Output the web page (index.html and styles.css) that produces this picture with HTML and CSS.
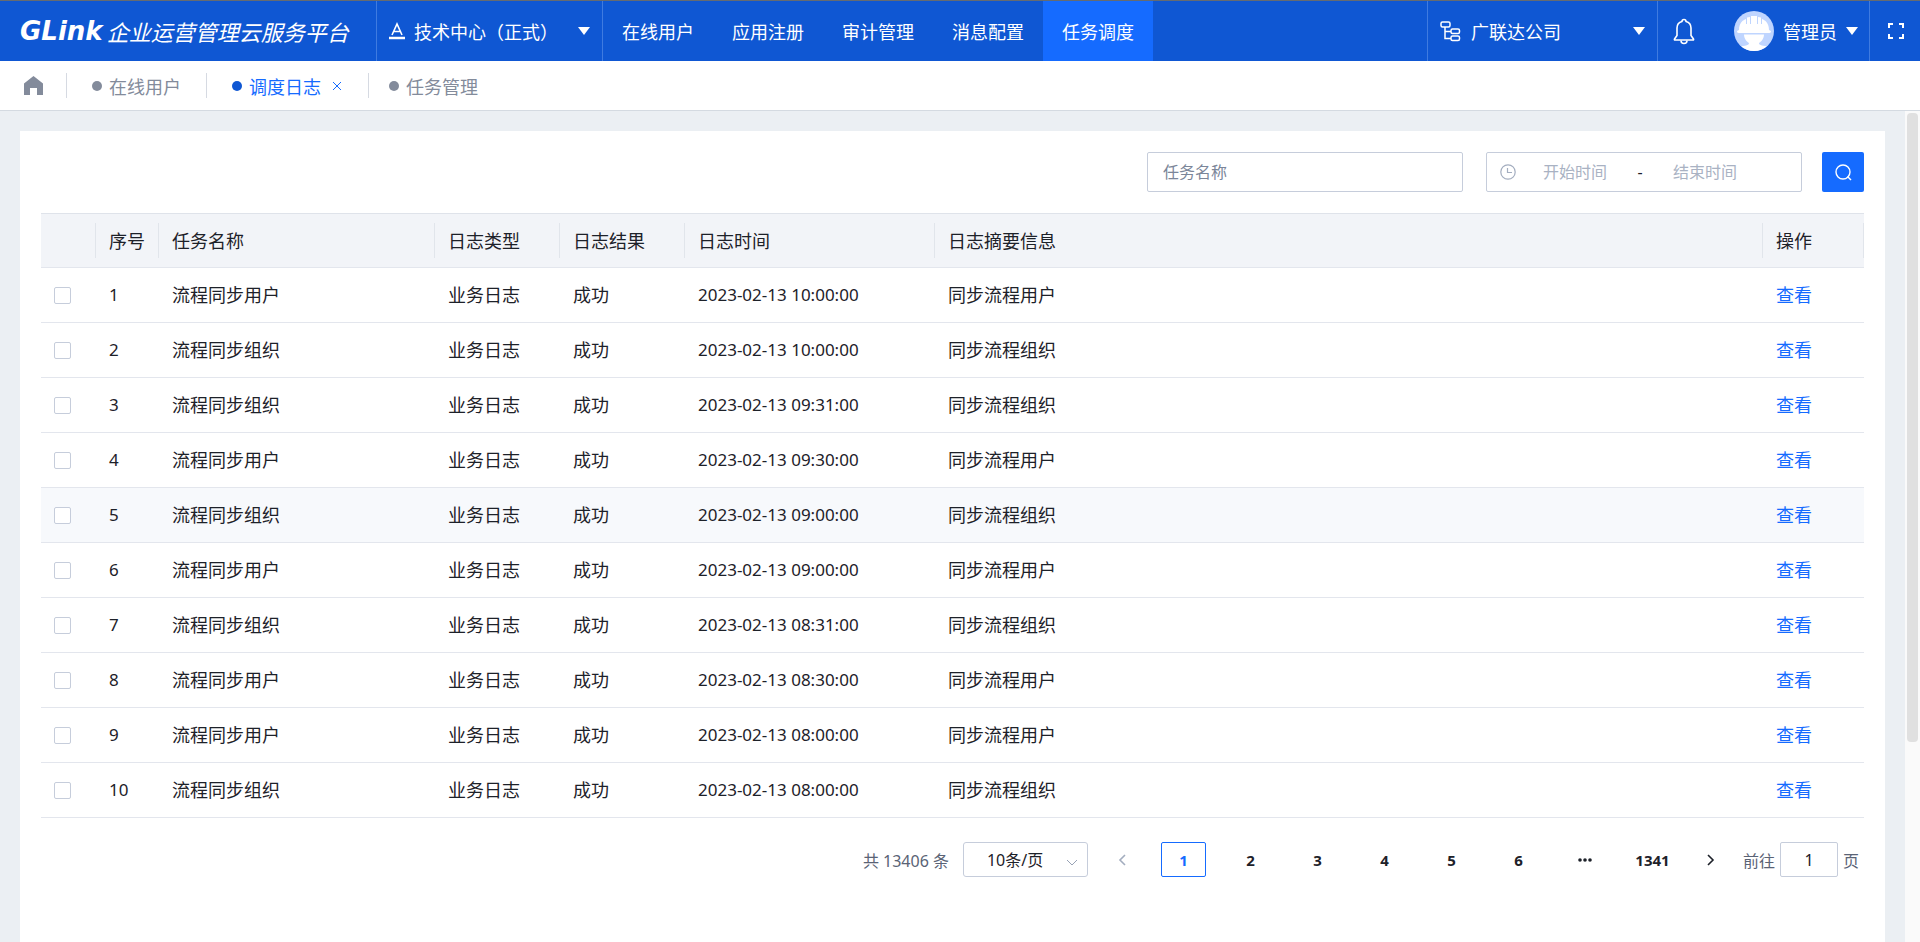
FILE: index.html
```html
<!DOCTYPE html>
<html lang="zh-CN">
<head>
    <meta charset="UTF-8">
    <meta name="viewport" content="width=device-width, initial-scale=1.0">
    <title>调度日志</title>
    <link rel="stylesheet" href="styles.css">
</head>

<body>

    <header class="header">

        <div class="brand">
            <span class="logo">GLink</span>
            <span class="brand-name">企业运营管理云服务平台</span>
        </div>

        <button type="button" class="app-select">
            <svg width="16" height="18" viewBox="0 0 16 18" fill="none" stroke="currentColor">
                <path d="M3 13L8 2l5 11M5 9.500h6" stroke-width="1.600"/>
                <path d="M0 16h16" stroke-width="2.500"/>
            </svg>
            <span>技术中心（正式）</span>
            <i class="caret"></i>
        </button>

        <nav class="nav">
            <a href="#">在线用户</a>
            <a href="#">应用注册</a>
            <a href="#">审计管理</a>
            <a href="#">消息配置</a>
            <a href="#" class="active">任务调度</a>
        </nav>

        <button type="button" class="org-select">
            <svg width="21" height="21" viewBox="0 0 21 21" fill="none" stroke="currentColor" stroke-width="1.5">
                <rect x="1" y="1" width="9" height="5" rx="1.500"/>
                <rect x="11" y="8" width="8.500" height="4.500" rx="1.500"/>
                <rect x="11" y="15" width="8.500" height="4.500" rx="1.500"/>
                <path d="M5 6v11.500h6M5 10.500h6"/>
            </svg>
            <span>广联达公司</span>
            <i class="caret"></i>
        </button>

        <button type="button" class="bell" aria-label="消息">
            <svg width="22" height="27" viewBox="0 0 22 27" fill="none" stroke="currentColor" stroke-width="1.6" stroke-linejoin="round">
                <path d="M9 3.500C9 .800 13 .800 13 3.500c3.500 1 5 3.500 5 6.500v7.500l2.500 3.500c.3.700 0 1-.5 1H2c-.5 0-.8-.3-.5-1L4 17.500V10c0-3 1.500-5.500 5-6.500z"/>
                <path d="M8 22.500c0 4 6 4 6 0"/>
            </svg>
        </button>

        <button type="button" class="user">
            <svg class="avatar" width="40" height="40" viewBox="0 0 40 40">
                <circle cx="20" cy="20" r="20" fill="#bfd5ff"/>
                <path d="M5 19C5 12 9 9 12 8v5h1V6.500L16 6v7h1V5h6v8h1V6l3 .5V13h1V8c3 1 7 4 7 11l2 1c0 2-1 2-3 2H6c-2 0-3 0-3-2z" fill="#fff"/>
                <path d="M10 23.500h20c0 4-3 7.500-5 8.500 0 2 2 2.500 8 3.200A20 20 0 0 1 7 35.200C13 34.500 15 34 15 32c-2-1-5-4.500-5-8.500z" fill="#fff"/>
            </svg>
            <span>管理员</span>
            <i class="caret"></i>
        </button>

        <button type="button" class="fullscreen" aria-label="全屏">
            <svg width="16" height="16" viewBox="0 0 16 16" fill="none" stroke="currentColor" stroke-width="2">
                <path d="M1 5V1h4M11 1h4v4M15 11v4h-4M5 15H1v-4"/>
            </svg>
        </button>

    </header>

    <nav class="tabs">
        <a href="#" class="tab-home" aria-label="首页">
            <svg width="19" height="19" viewBox="0 0 19 19" fill="currentColor">
                <path d="M9.500 0L19 7.500V19h-6v-7H6v7H0V7.500z"/>
            </svg>
        </a>
        <div class="tab"><i class="dot"></i><a href="#">在线用户</a></div>
        <div class="tab current">
            <i class="dot"></i><a href="#">调度日志</a>
            <button type="button" class="tab-close" aria-label="关闭">
                <svg width="10" height="10" viewBox="0 0 10 10" fill="none" stroke="currentColor"><path d="M1 1l8 8M9 1L1 9"/></svg>
            </button>
        </div>
        <div class="tab"><i class="dot"></i><a href="#">任务管理</a></div>
    </nav>

    <div class="page">

        <main class="card">

            <form class="search">
                <input type="text" class="search-name" placeholder="任务名称" aria-label="任务名称">
                <div class="date-range">
                    <svg width="16" height="16" viewBox="0 0 16 16" fill="none" stroke="currentColor" stroke-width="1.200">
                        <circle cx="8" cy="8" r="7.200"/>
                        <path d="M7.500 4v4.500H12"/>
                    </svg>
                    <input type="text" placeholder="开始时间" aria-label="开始时间">
                    <span>-</span>
                    <input type="text" placeholder="结束时间" aria-label="结束时间">
                </div>
                <button type="button" class="search-btn" aria-label="查询">
                    <svg width="17" height="17" viewBox="0 0 17 17" fill="none" stroke="currentColor" stroke-width="1.400">
                        <circle cx="8" cy="8" r="7"/>
                        <path d="M12.500 12.500l3.500 3.500"/>
                    </svg>
                </button>
            </form>

            <table class="log-table">
                <colgroup>
                    <col class="col-check">
                    <col class="col-index">
                    <col class="col-name">
                    <col class="col-short">
                    <col class="col-short">
                    <col class="col-time">
                    <col>
                    <col class="col-action">
                </colgroup>
                <thead>
                    <tr>
                        <th></th>
                        <th>序号</th>
                        <th>任务名称</th>
                        <th>日志类型</th>
                        <th>日志结果</th>
                        <th>日志时间</th>
                        <th>日志摘要信息</th>
                        <th>操作</th>
                    </tr>
                </thead>
                <tbody>
                    <tr>
                        <td><input type="checkbox" aria-label="选择 1"></td>
                        <td class="num">1</td>
                        <td>流程同步用户</td>
                        <td>业务日志</td>
                        <td>成功</td>
                        <td class="num">2023-02-13 10:00:00</td>
                        <td>同步流程用户</td>
                        <td><a href="#">查看</a></td>
                    </tr>
                    <tr>
                        <td><input type="checkbox" aria-label="选择 2"></td>
                        <td class="num">2</td>
                        <td>流程同步组织</td>
                        <td>业务日志</td>
                        <td>成功</td>
                        <td class="num">2023-02-13 10:00:00</td>
                        <td>同步流程组织</td>
                        <td><a href="#">查看</a></td>
                    </tr>
                    <tr>
                        <td><input type="checkbox" aria-label="选择 3"></td>
                        <td class="num">3</td>
                        <td>流程同步组织</td>
                        <td>业务日志</td>
                        <td>成功</td>
                        <td class="num">2023-02-13 09:31:00</td>
                        <td>同步流程组织</td>
                        <td><a href="#">查看</a></td>
                    </tr>
                    <tr>
                        <td><input type="checkbox" aria-label="选择 4"></td>
                        <td class="num">4</td>
                        <td>流程同步用户</td>
                        <td>业务日志</td>
                        <td>成功</td>
                        <td class="num">2023-02-13 09:30:00</td>
                        <td>同步流程用户</td>
                        <td><a href="#">查看</a></td>
                    </tr>
                    <tr class="hover">
                        <td><input type="checkbox" aria-label="选择 5"></td>
                        <td class="num">5</td>
                        <td>流程同步组织</td>
                        <td>业务日志</td>
                        <td>成功</td>
                        <td class="num">2023-02-13 09:00:00</td>
                        <td>同步流程组织</td>
                        <td><a href="#">查看</a></td>
                    </tr>
                    <tr>
                        <td><input type="checkbox" aria-label="选择 6"></td>
                        <td class="num">6</td>
                        <td>流程同步用户</td>
                        <td>业务日志</td>
                        <td>成功</td>
                        <td class="num">2023-02-13 09:00:00</td>
                        <td>同步流程用户</td>
                        <td><a href="#">查看</a></td>
                    </tr>
                    <tr>
                        <td><input type="checkbox" aria-label="选择 7"></td>
                        <td class="num">7</td>
                        <td>流程同步组织</td>
                        <td>业务日志</td>
                        <td>成功</td>
                        <td class="num">2023-02-13 08:31:00</td>
                        <td>同步流程组织</td>
                        <td><a href="#">查看</a></td>
                    </tr>
                    <tr>
                        <td><input type="checkbox" aria-label="选择 8"></td>
                        <td class="num">8</td>
                        <td>流程同步用户</td>
                        <td>业务日志</td>
                        <td>成功</td>
                        <td class="num">2023-02-13 08:30:00</td>
                        <td>同步流程用户</td>
                        <td><a href="#">查看</a></td>
                    </tr>
                    <tr>
                        <td><input type="checkbox" aria-label="选择 9"></td>
                        <td class="num">9</td>
                        <td>流程同步用户</td>
                        <td>业务日志</td>
                        <td>成功</td>
                        <td class="num">2023-02-13 08:00:00</td>
                        <td>同步流程用户</td>
                        <td><a href="#">查看</a></td>
                    </tr>
                    <tr>
                        <td><input type="checkbox" aria-label="选择 10"></td>
                        <td class="num">10</td>
                        <td>流程同步组织</td>
                        <td>业务日志</td>
                        <td>成功</td>
                        <td class="num">2023-02-13 08:00:00</td>
                        <td>同步流程组织</td>
                        <td><a href="#">查看</a></td>
                    </tr>
                </tbody>
            </table>

            <div class="pagination">
                <span>共 13406 条</span>
                <div class="page-size">
                    <select aria-label="每页条数">
                        <option>10条/页</option>
                        <option>20条/页</option>
                        <option>50条/页</option>
                    </select>
                    <svg width="12" height="7" viewBox="0 0 12 7" fill="none" stroke="currentColor"><path d="M1 1l5 5 5-5"/></svg>
                </div>
                <button type="button" class="arrow prev" aria-label="上一页" disabled>
                    <svg width="8" height="12" viewBox="0 0 8 12" fill="none" stroke="currentColor" stroke-width="1.600"><path d="M7 1L2 6l5 5"/></svg>
                </button>
                <button type="button" class="page-num current">1</button>
                <button type="button" class="page-num">2</button>
                <button type="button" class="page-num">3</button>
                <button type="button" class="page-num">4</button>
                <button type="button" class="page-num">5</button>
                <button type="button" class="page-num">6</button>
                <button type="button" class="page-num" aria-label="更多">
                    <svg width="14" height="4" viewBox="0 0 14 4" fill="currentColor"><circle cx="2" cy="2" r="1.800"/><circle cx="7" cy="2" r="1.800"/><circle cx="12" cy="2" r="1.800"/></svg>
                </button>
                <button type="button" class="page-num">1341</button>
                <button type="button" class="arrow" aria-label="下一页">
                    <svg width="8" height="12" viewBox="0 0 8 12" fill="none" stroke="currentColor" stroke-width="1.600"><path d="M1 1l5 5-5 5"/></svg>
                </button>
                <label class="jumper">前往 <input type="text" value="1"> 页</label>
            </div>

        </main>

        <div class="scrollbar"><div class="scrollbar-thumb"></div></div>

    </div>

</body>
</html>
```
FILE: styles.css
```css
* {
    box-sizing: border-box;
}

:root {
    --header: #0f57d3;
    --primary: #156bff;
    --line: #e3e6ed;
    --border: #c6cddb;
    --muted: #838b9b;
    --text: #1d2129;
}

body {
    margin: 0;
    height: 100vh;
    display: flex;
    flex-direction: column;
    overflow: hidden;
    font-family: "Noto Sans", "Noto Sans CJK SC", sans-serif;
    font-size: 18px;
    color: var(--text);
    background-color: #ebeff3;
}

button, input, select {
    font-family: inherit;
    font-size: inherit;
    color: inherit;
    margin: 0;
    padding: 0;
}

button {
    background: none;
    border: 0;
    cursor: pointer;
}

a {
    color: inherit;
    text-decoration: none;
}

svg {
    display: block;
    flex: none;
}

/* header */

.header {
    display: flex;
    flex: none;
    height: 61px;
    border-top: 1px solid #666b70;
    background-color: var(--header);
    color: white;
    font-family: "Noto Sans CJK SC", sans-serif;
    white-space: nowrap;
}

.header > button {
    display: flex;
    align-items: center;
}

.brand {
    display: flex;
    align-items: center;
    width: 376px;
    padding-left: 20px;
    gap: 4px;
}

.logo {
    font: italic bold 26px "DejaVu Sans", sans-serif;
}

.brand-name {
    font-size: 22px;
    font-style: italic;
}

.caret {
    border: 6px solid transparent;
    border-top: 8px solid white;
    border-bottom: 0;
}

.app-select .caret, .org-select .caret {
    margin-left: auto;
}

.header .app-select {
    width: 227px;
    padding: 0 12px;
    gap: 9px;
    border: solid #3f7be0;
    border-width: 0 1px;
}

.nav {
    display: flex;
    margin-right: auto;
}

.nav a {
    display: flex;
    align-items: center;
    padding: 0 19px;
}

.nav a.active {
    background-color: var(--primary);
}

.header .org-select {
    width: 231px;
    padding: 0 12px;
    gap: 10px;
    border: solid #3f7be0;
    border-width: 0 1px;
}

.header .bell {
    padding: 0 15px;
}

.header .user {
    padding: 0 11px 0 24px;
    gap: 9px;
}

.header .fullscreen {
    padding: 0 16px 0 18px;
    border-left: 1px solid #3f7be0;
}

/* tabs */

.tabs {
    display: flex;
    flex: none;
    align-items: center;
    height: 50px;
    padding-left: 24px;
    background-color: white;
    border-bottom: 1px solid #d4dae1;
    color: var(--muted);
}

.tab-home {
    padding-right: 23px;
}

.tab {
    display: flex;
    align-items: center;
    height: 25px;
    padding: 0 25px;
    gap: 7px;
    border-left: 1px solid #d6dae2;
}

.tab:last-child {
    padding-left: 20px;
}

.dot {
    width: 10px;
    height: 10px;
    border-radius: 50%;
    background-color: var(--muted);
}

.tab.current {
    color: var(--primary);
}

.tab.current .dot {
    background-color: var(--header);
}

.tab-close {
    padding: 0 1px 0 4px;
}

/* content */

.page {
    display: flex;
    flex: 1;
    min-height: 0;
    padding-left: 20px;
}

.card {
    flex: 1;
    margin: 20px 20px 0 0;
    padding: 21px 21px 0;
    background-color: white;
}

.scrollbar {
    width: 15px;
    padding: 2px;
    background-color: #fafafa;
}

.scrollbar-thumb {
    height: 76%;
    border-radius: 4px;
    background-color: #e0e0e0;
}

.search {
    display: flex;
    justify-content: flex-end;
    margin-bottom: 21px;
    font-size: 16px;
}

.search input {
    outline: 0;
}

.search-name {
    width: 316px;
    height: 40px;
    padding: 0 15px;
    margin-right: 23px;
    border: 1px solid var(--border);
    border-radius: 2px;
}

.search-name::placeholder {
    color: #7b8699;
}

.date-range {
    display: flex;
    align-items: center;
    width: 316px;
    height: 40px;
    padding: 0 13px;
    margin-right: 20px;
    border: 1px solid var(--border);
    border-radius: 2px;
}

.date-range svg {
    color: #a3adbf;
}

.date-range input {
    width: 118px;
    border: 0;
    text-align: center;
}

.date-range ::placeholder {
    color: #a9b2c3;
}

.date-range span {
    width: 12px;
    text-align: center;
}

.search-btn {
    display: flex;
    align-items: center;
    justify-content: center;
    width: 42px;
    height: 40px;
    border-radius: 2px;
    background-color: var(--primary);
    color: white;
}

/* table */

.log-table {
    width: 100%;
    table-layout: fixed;
    border-collapse: separate;
    border-spacing: 0;
    border-top: 1px solid #dfe3ea;
}

.col-check {
    width: 55px;
}

.col-index {
    width: 63px;
}

.col-name {
    width: 276px;
}

.col-short {
    width: 125px;
}

.col-time {
    width: 250px;
}

.col-action {
    width: 101px;
}

.log-table th, .log-table td {
    height: 55px;
    padding: 0 13px;
    border-bottom: 1px solid var(--line);
    font-weight: 400;
    line-height: 24px;
    text-align: left;
    white-space: nowrap;
}

.log-table th {
    height: 54px;
    background: linear-gradient(#e1e5eb, #e1e5eb) no-repeat right center / 1px 35px #f2f4f8;
}

.log-table .num {
    font-size: 17px;
}

.log-table a {
    color: var(--primary);
}

.log-table tr.hover {
    background-color: #f7f9fc;
}

.log-table input {
    appearance: none;
    display: block;
    width: 17px;
    height: 17px;
    border: 1px solid var(--border);
    border-radius: 2px;
    background-color: white;
}

.log-table input:checked {
    background-color: var(--primary);
}

/* pagination */

.pagination {
    display: flex;
    align-items: center;
    justify-content: flex-end;
    margin-top: 24px;
    padding-right: 5px;
    font-size: 16px;
    color: #5a6375;
}

.page-size {
    position: relative;
    margin-left: 14px;
}

.page-size select {
    appearance: none;
    display: block;
    width: 125px;
    height: 35px;
    padding-left: 23px;
    border: 1px solid var(--border);
    border-radius: 3px;
    background-color: white;
    color: var(--text);
}

.page-size svg {
    position: absolute;
    right: 10px;
    top: 17px;
    color: #98a2b5;
    pointer-events: none;
}

.arrow {
    display: flex;
    align-items: center;
    justify-content: center;
    width: 50px;
    height: 35px;
    color: var(--text);
}

.arrow.prev {
    width: 62px;
    padding-left: 6px;
    color: #a3adbf;
}

.page-num {
    display: flex;
    align-items: center;
    justify-content: center;
    width: 45px;
    height: 35px;
    margin: 0 11px;
    font-size: 15px;
    font-weight: 700;
    color: var(--text);
}

.page-num.current {
    border: 1px solid var(--primary);
    border-radius: 2px;
    color: var(--primary);
}

.jumper {
    display: flex;
    align-items: center;
    gap: 5px;
    margin-left: 7px;
}

.jumper input {
    width: 58px;
    height: 35px;
    border: 1px solid var(--border);
    border-radius: 2px;
    color: var(--text);
    text-align: center;
}
```
